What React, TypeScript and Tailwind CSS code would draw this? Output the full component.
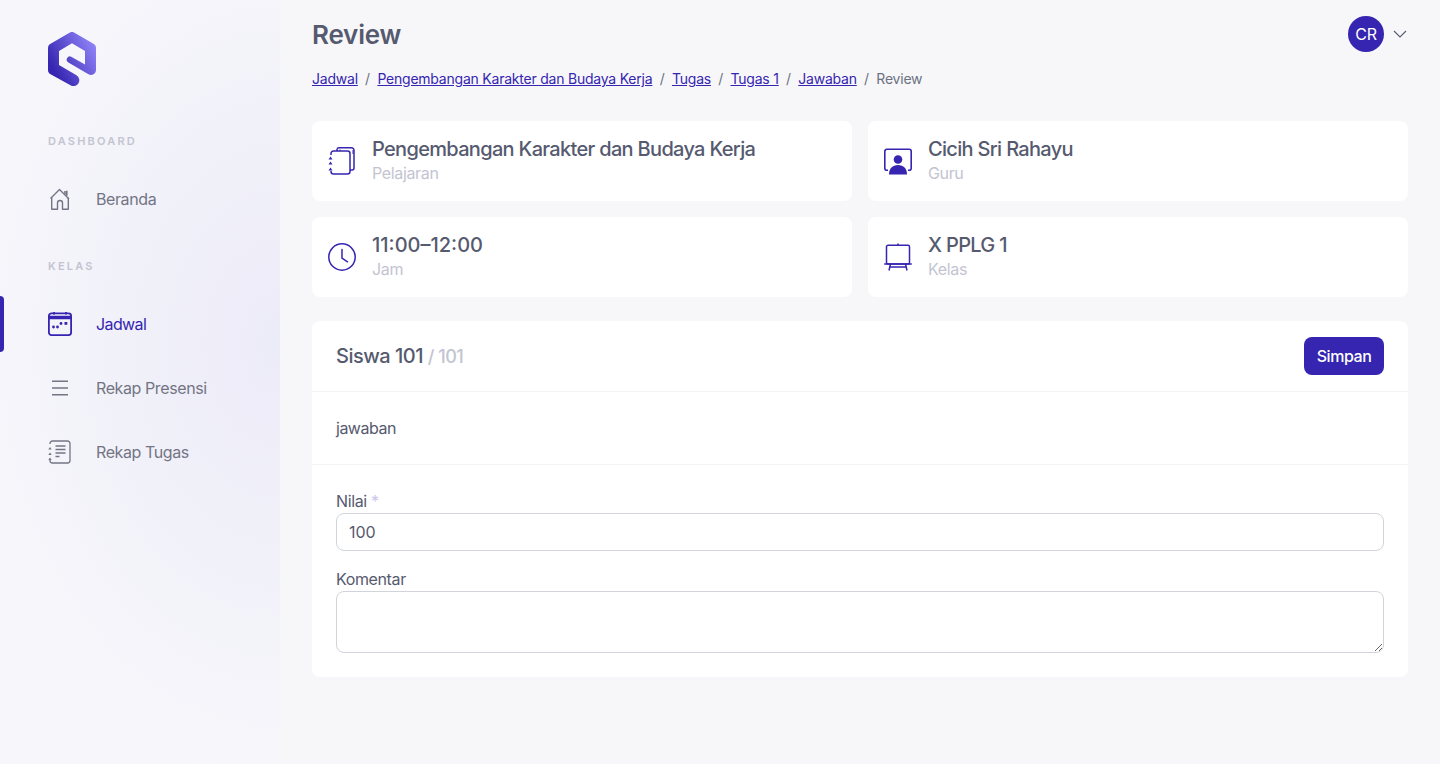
const font = "font-['Inter',sans-serif]";

function Logo() {
  return (
    <svg width="48" height="54" viewBox="0 0 48 54" fill="none">
      <defs>
        <linearGradient id="logoGrad" x1="4" y1="36" x2="46" y2="12" gradientUnits="userSpaceOnUse">
          <stop offset="0" stopColor="#3525b0" />
          <stop offset="1" stopColor="#8f82f7" />
        </linearGradient>
      </defs>
      <path
        d="M21.500.7a5 5 0 0 1 5 0L45 11.500A5 5 0 0 1 48 16v22a5 5 0 0 1-7.500 4.300L20 30.200a3.200 3.200 0 0 1 3.200-5.500L37 32.500V19L24 11.200 11 19v14l17.500 10.300a5.600 5.600 0 0 1-6 10L3 42.500A5 5 0 0 1 0 38V16a5 5 0 0 1 3-4.500z"
        fill="url(#logoGrad)"
      />
    </svg>
  );
}

function HomeIcon() {
  return (
    <svg width="24" height="24" viewBox="0 0 24 24" fill="none" stroke="currentColor" strokeWidth="1.4" strokeLinejoin="round">
      <path d="M2.500 11.500 11.500 2.500l9.500 9.500" />
      <path d="M3.700 10.500V22.200h5.800v-6.200a2.500 2.500 0 0 1 5 0v6.200h5.800V10.500" />
      <path d="M17 4v3.500M18.800 3.800v5" strokeWidth="1.600" />
    </svg>
  );
}

function CalendarIcon() {
  return (
    <svg width="24" height="24" viewBox="0 0 24 24" fill="none" stroke="currentColor" strokeWidth="1.800">
      <rect x="0.900" y="1.400" width="22.200" height="21.700" rx="2.500" />
      <path d="M0.800 5.500h22.400" strokeWidth="3.500" />
      <path d="M6 0v2.500M18 0v2.500" />
      <g fill="currentColor" stroke="none">
        <circle cx="5.500" cy="15" r="1.400" />
        <circle cx="9.500" cy="15" r="1.400" />
        <circle cx="13" cy="11.500" r="1.400" />
        <rect x="16.500" y="10" width="2.800" height="2.800" />
      </g>
    </svg>
  );
}

function MenuIcon() {
  return (
    <svg width="24" height="24" viewBox="0 0 24 24" fill="none" stroke="currentColor" strokeWidth="1.500">
      <path d="M4 5.300h16M4 12h16M4 18.700h16" />
    </svg>
  );
}

function TaskIcon() {
  return (
    <svg width="24" height="24" viewBox="0 0 24 24" fill="none" stroke="currentColor" strokeWidth="1.300">
      <path d="M2 4V3.500A2.500 2.500 0 0 1 4.500 1h15A2.500 2.500 0 0 1 22 3.500v17a2.500 2.500 0 0 1-2.500 2.500h-15A2.500 2.500 0 0 1 2 20.500V20" />
      <path d="M7.500 6h10M7.500 9.500h10M7.500 13h10M7.500 16.500h4" />
      <path d="M2 7 3.700 9.500H.300zM2 12.500l1.700 2.500H.300zM2 17.500 3.700 20H.300z" fill="currentColor" stroke="none" />
    </svg>
  );
}

function NotebookIcon() {
  return (
    <svg width="28" height="28" viewBox="0 0 28 28" fill="none" stroke="#3525b0" strokeWidth="1.500">
      <path d="M3 8V6.500A2.500 2.500 0 0 1 5.500 4h14A2.500 2.500 0 0 1 22 6.500v18a2.500 2.500 0 0 1-2.500 2.500h-14A2.500 2.500 0 0 1 3 24.500V24" />
      <path d="M9 4V2.500A2 2 0 0 1 11 .8h12.500A2.500 2.500 0 0 1 26 3.300V21a2 2 0 0 1-2 2h-2" />
      <path d="M12 4V2.500M25 7V3" strokeWidth="1" />
      <path d="M2.500 9.500 4.500 12.500H.500zM2.500 14.500l2 3H.500zM2.500 20.500l2 3H.500z" fill="#3525b0" stroke="none" />
    </svg>
  );
}

function ClockIcon() {
  return (
    <svg width="28" height="28" viewBox="0 0 28 28" fill="none" stroke="#3525b0" strokeWidth="1.500" strokeLinecap="round">
      <circle cx="14" cy="14" r="13.200" />
      <path d="M14 6.500V15l5.500 3.800" />
    </svg>
  );
}

function TeacherIcon() {
  return (
    <svg width="28" height="28" viewBox="0 0 28 28" fill="none" stroke="#3525b0" strokeWidth="1.600">
      <path d="M4 23.200H2.800A2 2 0 0 1 .800 21.200V4.300a2 2 0 0 1 2-2h22.400a2 2 0 0 1 2 2v16.900a2 2 0 0 1-2 2H24" />
      <circle cx="14" cy="12.500" r="4.300" fill="#3525b0" stroke="none" />
      <path d="M5 27.500c0-6 3.500-9.500 9-9.500s9 3.500 9 9.500z" fill="#3525b0" stroke="none" />
    </svg>
  );
}

function EaselIcon() {
  return (
    <svg width="28" height="28" viewBox="0 0 28 28" fill="none" stroke="#3525b0" strokeWidth="1.500">
      <rect x="2.500" y="2.300" width="23" height="18.700" rx="1.500" />
      <path d="M.2 21h27.600" />
      <path d="M14 .5v2" />
      <path d="M6.500 21 5 27.500M21.500 21l1.500 6.500M6 24h16" />
    </svg>
  );
}

function NavItem({ icon, label, active }: { icon: React.ReactNode; label: string; active?: boolean }) {
  return (
    <a className={`relative flex h-14 items-center gap-6 pl-12 text-base ${active ? "tracking-[-0.6px] text-[#3525b0]" : "tracking-[-0.4px] text-[#737584]"}`}>
      {active && <span className="absolute left-0 top-0 h-14 w-1 rounded-r bg-[#3525b0]" />}
      {icon}
      <span>{label}</span>
    </a>
  );
}

function InfoCard({ icon, title, sub, numeric }: { icon: React.ReactNode; title: string; sub: string; numeric?: boolean }) {
  return (
    <div className="flex h-20 items-center gap-4 rounded-lg bg-white px-4">
      {icon}
      <div>
        <div className={`text-xl leading-6 font-medium text-[#565a6f] ${numeric ? "" : "tracking-[-0.68px]"}`}>{title}</div>
        <div className="text-base leading-6 tracking-[-0.35px] text-[#c3c4d1]">{sub}</div>
      </div>
    </div>
  );
}

function Crumb({ children }: { children: React.ReactNode }) {
  return (
    <>
      <a className="tracking-[-0.22px] text-[#3525b0] underline">{children}</a>
      <span className="mx-[7.25px] text-[#6b7280]">/</span>
    </>
  );
}

export default function App() {
  return (
    <div className={`flex min-h-[764px] bg-[#f7f7fa] ${font}`}>
      {/* Sidebar */}
      <aside className="w-[280px] shrink-0 bg-[radial-gradient(ellipse_320px_440px_at_100%_45%,#ecebf8_0%,#f7f7fb_100%)]">
        <div className="pl-12 pt-8">
          <Logo />
        </div>
        <div className="pl-12 pt-[47px] text-[11px] leading-4 font-semibold tracking-[0.2em] text-[#c3c4d1]">DASHBOARD</div>
        <div className="mt-[22px]">
          <NavItem icon={<HomeIcon />} label="Beranda" />
        </div>
        <div className="pl-12 pt-[31px] text-[11px] leading-4 font-semibold tracking-[0.2em] text-[#c3c4d1]">KELAS</div>
        <div className="mt-[22px] flex flex-col gap-2">
          <NavItem icon={<CalendarIcon />} label="Jadwal" active />
          <NavItem icon={<MenuIcon />} label="Rekap Presensi" />
          <NavItem icon={<TaskIcon />} label="Rekap Tugas" />
        </div>
      </aside>

      {/* Main */}
      <main className="flex-1 px-8 pt-4">
        <div className="flex items-start justify-between">
          <h1 className="pt-px text-[26px] leading-[35px] font-semibold tracking-[-0.2px] text-[#565a6f]">Review</h1>
          <div className="flex items-center gap-2">
            <div className="flex h-9 w-9 items-center justify-center rounded-full bg-[#3525b0] text-base font-normal tracking-[-0.3px] text-white">CR</div>
            <svg width="16" height="16" viewBox="0 0 16 16" fill="none" stroke="#565a6f" strokeWidth="1.100">
              <path d="M2 5l6 6 6-6" />
            </svg>
          </div>
        </div>

        <nav className="mt-[17px] flex h-5 items-center text-sm">
          <Crumb>Jadwal</Crumb>
          <Crumb>Pengembangan Karakter dan Budaya Kerja</Crumb>
          <Crumb>Tugas</Crumb>
          <Crumb>Tugas 1</Crumb>
          <Crumb>Jawaban</Crumb>
          <span className="tracking-[-0.22px] text-[#6b7280]">Review</span>
        </nav>

        <div className="mt-8 grid grid-cols-2 gap-4">
          <InfoCard icon={<NotebookIcon />} title="Pengembangan Karakter dan Budaya Kerja" sub="Pelajaran" />
          <InfoCard icon={<TeacherIcon />} title="Cicih Sri Rahayu" sub="Guru" />
          <InfoCard icon={<ClockIcon />} title="11:00–12:00" sub="Jam" numeric />
          <InfoCard icon={<EaselIcon />} title="X PPLG 1" sub="Kelas" />
        </div>

        <div className="mt-6 rounded-lg bg-white">
          <div className="flex h-[71px] items-center justify-between border-b border-[#f3f4f6] px-6">
            <div className="text-xl font-medium tracking-[-0.5px] text-[#565a6f]">
              Siswa 101 <span className="text-lg text-[#c3c4d1]">/ 101</span>
            </div>
            <button className="h-[38px] w-20 rounded-lg bg-[#3525b0] text-base font-medium tracking-[-0.45px] text-white">Simpan</button>
          </div>
          <div className="flex h-[73px] items-center border-b border-[#f3f4f6] px-6 text-base tracking-[-0.5px] text-[#565a6f]">jawaban</div>
          <div className="px-6 pt-6 pb-6">
            <label className="block text-base leading-6 tracking-[-0.38px] text-[#565a6f]">
              Nilai <span className="text-[#c9c6ec]">*</span>
            </label>
            <input
              defaultValue="100"
              className="block h-[38px] w-full rounded-lg border border-[#d1d5db] bg-white px-3 text-base text-[#565a6f] outline-none"
            />
            <label className="mt-4 block text-base leading-6 tracking-[-0.38px] text-[#565a6f]">Komentar</label>
            <textarea className="block h-[62px] w-full rounded-lg border border-[#d1d5db] bg-white px-3 py-2 text-base outline-none" />
          </div>
        </div>
      </main>
    </div>
  );
}
